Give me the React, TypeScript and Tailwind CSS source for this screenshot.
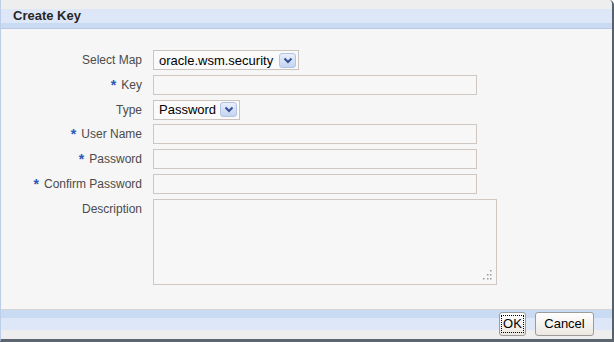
import React from 'react';

const Required = () => <span className="text-[#2a56b8] font-bold text-[14px] leading-none mr-[5px]">*</span>;

const DropArrow = () => (
  <span className="flex items-center justify-center w-[17px] h-[15px] rounded-[3px] border border-[#b2c3e4] bg-[linear-gradient(to_bottom,#e9effb,#c4d4f1)]">
    <svg width="10" height="7" viewBox="0 0 10 7">
      <path d="M1.5 1.5 L5 5 L8.5 1.5" fill="none" stroke="#34508f" strokeWidth="2" />
    </svg>
  </span>
);

const Select = ({ value, width }: { value: string; width: string }) => (
  <div className={`${width} h-[20px] flex items-center justify-between border border-[#cbc4be] bg-[#fafafa] pl-[5px] pr-[2px]`}>
    <span className="text-[13px] text-black leading-none">{value}</span>
    <DropArrow />
  </div>
);

const Input = () => <div className="w-[324px] h-[20px] border border-[#cfc8c2] bg-[#f7f7f7]" />;

const Label = ({ text, required }: { text: string; required?: boolean }) => (
  <div className="h-[20px] flex items-center justify-end text-[12px] text-[#4b4b4b]">
    {required && <Required />}
    {text}
  </div>
);

export default function App() {
  return (
    <div
      className="w-[614px] h-[342px] flex flex-col bg-[#f6f6f6] border-l border-l-[#bccde9] border-r-2 border-r-[#56616c] border-b-[3px] border-b-[#5d6670] rounded-tr-[5px] overflow-hidden"
      style={{ fontFamily: '"Liberation Sans", Arial, sans-serif' }}
    >
      {/* header */}
      <div className="h-[29px] shrink-0 flex items-center pl-[12px] pt-[4px] border-b border-b-[#b9cae6] bg-[linear-gradient(to_bottom,#eeeeee_0px,#eeeeee_9px,#dde7f7_9px,#dde7f7_23px,#c9daf3_23px)]">
        <span className="text-[13px] font-bold text-[#262626]">Create Key</span>
      </div>

      {/* form */}
      <div className="flex-1 pt-[21px]">
        <div className="grid grid-cols-[141px_auto] gap-x-[11px] gap-y-[4.8px] items-start">
          <Label text="Select Map" />
          <Select value="oracle.wsm.security" width="w-[146px]" />

          <Label text="Key" required />
          <Input />

          <Label text="Type" />
          <Select value="Password" width="w-[87px]" />

          <Label text="User Name" required />
          <Input />

          <Label text="Password" required />
          <Input />

          <Label text="Confirm Password" required />
          <Input />

          <Label text="Description" />
          <div className="relative w-[344px] h-[86px] border border-[#cfc8c2] bg-[#f7f7f7]">
            <svg className="absolute right-[4px] bottom-[4px]" width="10" height="10" viewBox="0 0 10 10">
              <g fill="#9a9a9a">
                <rect x="8" y="0" width="1.5" height="1.5" />
                <rect x="5" y="4" width="1.5" height="1.5" />
                <rect x="8" y="4" width="1.5" height="1.5" />
                <rect x="1" y="8" width="1.5" height="1.5" />
                <rect x="5" y="8" width="1.5" height="1.5" />
                <rect x="8" y="8" width="1.5" height="1.5" />
              </g>
            </svg>
          </div>
        </div>
      </div>

      {/* footer */}
      <div className="h-[30px] shrink-0 flex items-start justify-end gap-[9px] pr-[18px] pt-[2px] border-t border-t-[#d6d6d6] bg-[linear-gradient(to_bottom,#c9daf3_0px,#c9daf3_8px,#dde7f7_8px,#dde7f7_20px,#eeeeee_20px)]">
        <button className="w-[27px] h-[24px] flex items-center justify-center rounded-[3px] border border-[#9c9c9c] bg-[linear-gradient(to_bottom,#ffffff,#ece8e1)] text-[13px] text-black">
          <span className="border border-dotted border-black px-[1px] leading-[16px]">OK</span>
        </button>
        <button className="w-[59px] h-[24px] flex items-center justify-center rounded-[3px] border border-[#9c9c9c] bg-[linear-gradient(to_bottom,#ffffff,#ece8e1)] text-[13px] text-black">
          Cancel
        </button>
      </div>
    </div>
  );
}
